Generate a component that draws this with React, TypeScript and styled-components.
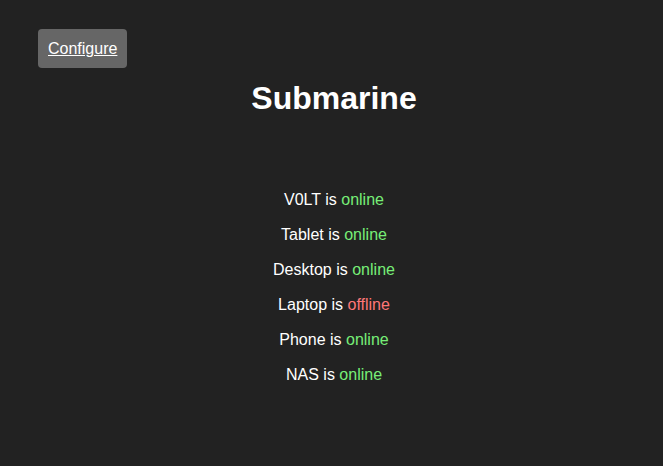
import React from "react";
import styled, { createGlobalStyle } from "styled-components";

const Global = createGlobalStyle`
  html, body { margin: 0; padding: 0; background: #222222; }
  body { font-family: "Liberation Sans", Arial, sans-serif; color: #ffffff; }
`;

const Page = styled.div`
  min-height: 466px;
  padding: 29px 38px 0 38px;
  box-sizing: border-box;
`;

const ConfigButton = styled.a`
  display: inline-block;
  background: #666666;
  color: #ffffff;
  text-decoration: underline;
  font-size: 16px;
  line-height: 19px;
  padding: 10px;
  border-radius: 4px;
  cursor: pointer;
`;

const Title = styled.h1`
  margin: 12px 0 0 0;
  padding-left: 5px;
  text-align: center;
  font-size: 32px;
  font-weight: bold;
  line-height: 37px;
`;

const DeviceList = styled.div`
  margin-top: 73px;
  padding-left: 5px;
  display: flex;
  flex-direction: column;
  align-items: center;
  gap: 16px;
`;

const DeviceRow = styled.div`
  font-size: 16px;
  line-height: 19px;
  color: #ffffff;
`;

const Status = styled.span<{ $online: boolean }>`
  color: ${(p) => (p.$online ? "#77ee77" : "#ff7777")};
`;

const devices: { name: string; online: boolean }[] = [
  { name: "V0LT", online: true },
  { name: "Tablet", online: true },
  { name: "Desktop", online: true },
  { name: "Laptop", online: false },
  { name: "Phone", online: true },
  { name: "NAS", online: true },
];

export default function App() {
  return (
    <>
      <Global />
      <Page>
        <ConfigButton>Configure</ConfigButton>
        <Title>Submarine</Title>
        <DeviceList>
          {devices.map((d) => (
            <DeviceRow key={d.name}>
              {d.name} is{" "}
              <Status $online={d.online}>{d.online ? "online" : "offline"}</Status>
            </DeviceRow>
          ))}
        </DeviceList>
      </Page>
    </>
  );
}
